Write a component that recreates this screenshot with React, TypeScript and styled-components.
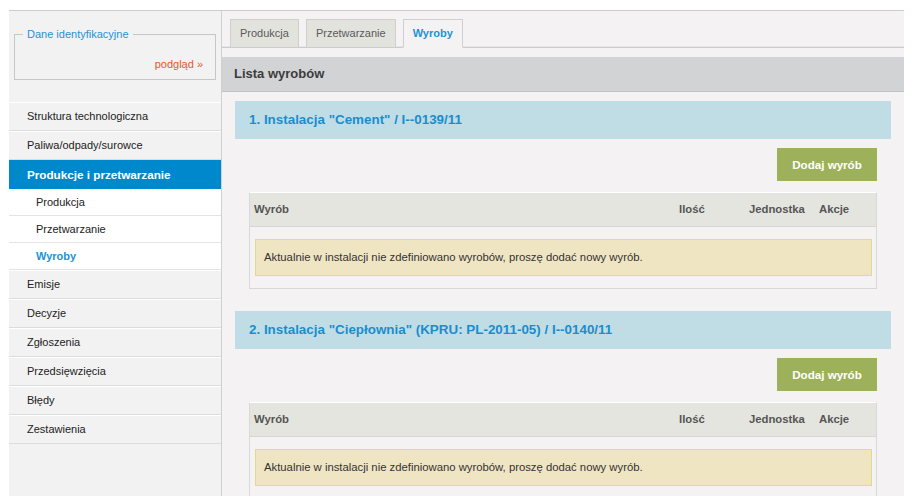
import React from 'react';
import styled, { createGlobalStyle } from 'styled-components';

const GlobalStyle = createGlobalStyle`
  html, body {
    margin: 0;
    padding: 0;
    background: #fff;
    font-family: 'Liberation Sans', Arial, sans-serif;
    font-size: 11px;
    color: #222;
  }
`;

const Page = styled.div`
  display: flex;
  margin: 10px 9px 0 9px;
  height: 486px;
  border-top: 1px solid #cccccc;
  overflow: hidden;
`;

const Sidebar = styled.aside`
  width: 212px;
  flex-shrink: 0;
  background: #f2f2f2;
  border-right: 1px solid #d0d0d0;
`;

const InfoBox = styled.fieldset`
  margin: 17px 5px 0 5px;
  padding: 0 12px 8px 8px;
  border: 1px solid #c6c6c6;
`;

const InfoLegend = styled.legend`
  padding: 0 4px;
  line-height: 13px;
  font-size: 11px;
  color: #1e92d4;
`;

const PreviewLink = styled.a`
  display: block;
  margin-top: 17px;
  text-align: right;
  line-height: 13px;
  color: #e4582c;
  text-decoration: none;
`;

const Menu = styled.ul`
  list-style: none;
  margin: 22px 0 0 0;
  padding: 0;
`;

const MenuItem = styled.li<{ $active?: boolean }>`
  height: 27px;
  line-height: 27px;
  padding-left: 18px;
  border-top: 1px solid ${(p) => (p.$active ? '#0088cc' : '#ffffff')};
  border-bottom: 1px solid ${(p) => (p.$active ? '#0088cc' : '#dcdcdc')};
  background: ${(p) => (p.$active ? '#0088cc' : 'transparent')};
  color: ${(p) => (p.$active ? '#ffffff' : '#222')};
  font-weight: ${(p) => (p.$active ? 'bold' : 'normal')};
  font-size: ${(p) => (p.$active ? '11.7px' : '11px')};
`;

const SubItem = styled.li<{ $current?: boolean }>`
  height: 26px;
  line-height: 26px;
  padding-left: 27px;
  background: #ffffff;
  border-bottom: 1px solid #e4e4e4;
  color: ${(p) => (p.$current ? '#1e92d4' : '#222')};
  font-weight: ${(p) => (p.$current ? 'bold' : 'normal')};
`;

const Main = styled.main`
  flex: 1;
  background: #f4f2f2;
`;

const TabBar = styled.div`
  display: flex;
  gap: 7px;
  padding: 8px 0 0 8px;
  border-bottom: 1px solid #cccccc;
  box-shadow: 0 -1px 0 #e6e6e6 inset;
`;

const Tab = styled.div<{ $active?: boolean }>`
  height: 27px;
  line-height: 27px;
  padding: 0 9px;
  margin-bottom: -1px;
  border: 1px solid #cfcfcf;
  border-bottom: ${(p) => (p.$active ? '1px solid #f4f2f2' : '1px solid #cccccc')};
  background: ${(p) => (p.$active ? '#f4f2f2' : '#e3e3de')};
  color: ${(p) => (p.$active ? '#1e92d4' : '#5a5a5a')};
  font-weight: ${(p) => (p.$active ? 'bold' : 'normal')};
  font-size: 11px;
`;

const ListBar = styled.div`
  margin-top: 9px;
  height: 34px;
  line-height: 34px;
  padding-left: 12px;
  background: #d2d3d4;
  border-bottom: 1px solid #c4c4c4;
  color: #3c3c3c;
  font-weight: bold;
  font-size: 13px;
`;

const Section = styled.section`
  margin: 9px 13px 22px 13px;
`;

const InstallHeader = styled.h2`
  margin: 0;
  height: 38px;
  line-height: 38px;
  padding-left: 14px;
  background: #c0dde6;
  color: #1b8dcc;
  font-size: 13.4px;
  font-weight: bold;
`;

const Actions = styled.div`
  display: flex;
  justify-content: flex-end;
  padding: 9px 14px 11px 0;
`;

const AddButton = styled.button`
  width: 100px;
  height: 33px;
  border: none;
  background: #9db15a;
  color: #fff;
  font-family: 'Liberation Sans', Arial, sans-serif;
  font-size: 11.6px;
  font-weight: bold;
  cursor: pointer;
`;

const Table = styled.div`
  margin: 0 14px;
  border: 1px solid #d8d8d8;
  border-top: 1px solid #ffffff;
`;

const HeadRow = styled.div`
  display: grid;
  grid-template-columns: 1fr 70px 70px 61px;
  height: 33px;
  line-height: 32px;
  background: #e5e5e0;
  border-bottom: 1px solid #d6d6d6;
`;

const HeadCell = styled.div`
  padding-left: 4px;
  color: #555;
  font-weight: bold;
  font-size: 11.3px;
`;

const TableBody = styled.div`
  padding: 12px 4px 12px 5px;
`;

const Notice = styled.div`
  height: 35px;
  line-height: 35px;
  padding-left: 8px;
  background: #f0e5c3;
  border: 1px solid #e0d98f;
  color: #333;
  font-size: 11.3px;
`;

const installations = [
  '1. Instalacja "Cement" / I--0139/11',
  '2. Instalacja "Ciepłownia" (KPRU: PL-2011-05) / I--0140/11',
];

const menuTop = ['Struktura technologiczna', 'Paliwa/odpady/surowce'];
const menuBottom = ['Emisje', 'Decyzje', 'Zgłoszenia', 'Przedsięwzięcia', 'Błędy', 'Zestawienia'];

const App: React.FC = () => {
  return (
    <>
      <GlobalStyle />
      <Page>
        <Sidebar>
          <InfoBox>
            <InfoLegend>Dane identyfikacyjne</InfoLegend>
            <PreviewLink href="#">podgląd »</PreviewLink>
          </InfoBox>
          <Menu>
            {menuTop.map((m) => (
              <MenuItem key={m}>{m}</MenuItem>
            ))}
            <MenuItem $active>Produkcje i przetwarzanie</MenuItem>
            <SubItem>Produkcja</SubItem>
            <SubItem>Przetwarzanie</SubItem>
            <SubItem $current>Wyroby</SubItem>
            {menuBottom.map((m) => (
              <MenuItem key={m}>{m}</MenuItem>
            ))}
          </Menu>
        </Sidebar>
        <Main>
          <TabBar>
            <Tab>Produkcja</Tab>
            <Tab>Przetwarzanie</Tab>
            <Tab $active>Wyroby</Tab>
          </TabBar>
          <ListBar>Lista wyrobów</ListBar>
          {installations.map((name) => (
            <Section key={name}>
              <InstallHeader>{name}</InstallHeader>
              <Actions>
                <AddButton>Dodaj wyrób</AddButton>
              </Actions>
              <Table>
                <HeadRow>
                  <HeadCell>Wyrób</HeadCell>
                  <HeadCell>Ilość</HeadCell>
                  <HeadCell>Jednostka</HeadCell>
                  <HeadCell>Akcje</HeadCell>
                </HeadRow>
                <TableBody>
                  <Notice>Aktualnie w instalacji nie zdefiniowano wyrobów, proszę dodać nowy wyrób.</Notice>
                </TableBody>
              </Table>
            </Section>
          ))}
        </Main>
      </Page>
    </>
  );
};

export default App;
